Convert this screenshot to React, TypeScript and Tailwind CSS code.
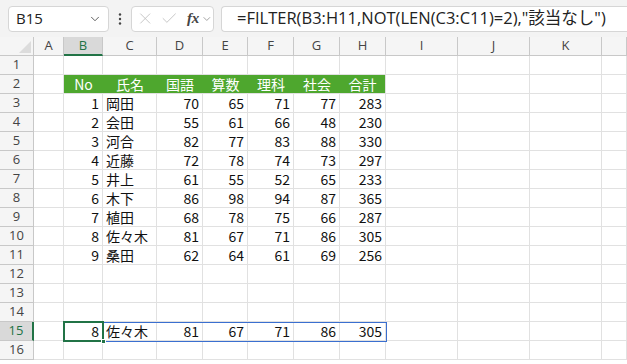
import { ChevronDown, X, Check } from "lucide-react";

const cols = ["A", "B", "C", "D", "E", "F", "G", "H", "I", "J", "K", ""];
const widths = [30, 39, 54, 46, 45, 46, 46, 46, 72, 72, 72, 25];

const header = ["No", "氏名", "国語", "算数", "理科", "社会", "合計"];
const data: (string | number)[][] = [
  [1, "岡田", 70, 65, 71, 77, 283],
  [2, "会田", 55, 61, 66, 48, 230],
  [3, "河合", 82, 77, 83, 88, 330],
  [4, "近藤", 72, 78, 74, 73, 297],
  [5, "井上", 61, 55, 52, 65, 233],
  [6, "木下", 86, 98, 94, 87, 365],
  [7, "植田", 68, 78, 75, 66, 287],
  [8, "佐々木", 81, 67, 71, 86, 305],
  [9, "桑田", 62, 64, 61, 69, 256],
];
const result: (string | number)[] = [8, "佐々木", 81, 67, 71, 86, 305];

const font = { fontFamily: '"Noto Sans CJK JP", "Noto Sans", sans-serif' };

function rowContent(r: number): (string | number)[] | "header" | null {
  if (r === 2) return "header";
  if (r >= 3 && r <= 11) return data[r - 3];
  if (r === 15) return result;
  return null;
}

export default function App() {
  const rows = Array.from({ length: 16 }, (_, i) => i + 1);
  return (
    <div className="relative h-[364px] w-[627px] overflow-hidden bg-white" style={font}>
      {/* formula bar */}
      <div className="flex h-[37px] items-center bg-[#f3f3f3] pl-[8px]">
        <div className="flex h-[26px] w-[101px] items-center justify-between rounded-[4px] border border-[#d6d6d6] bg-white pl-[7px] pr-[6px] text-[15px] text-[#222]">
          <span style={{ fontFamily: '"Open Sans", sans-serif' }}>B15</span>
          <ChevronDown size={14} strokeWidth={1.6} className="text-[#555]" />
        </div>
        <div className="flex w-[22px] justify-center">
          <svg width="4" height="14" viewBox="0 0 4 14">
            <circle cx="2" cy="2.5" r="1.2" fill="#444" />
            <circle cx="2" cy="7" r="1.2" fill="#444" />
            <circle cx="2" cy="11.5" r="1.2" fill="#444" />
          </svg>
        </div>
        <div className="flex h-[26px] w-[83px] items-center rounded-[4px] border border-[#d6d6d6] bg-white pl-[4px] text-[#bdbdbd]">
          <X size={19} strokeWidth={1.1} />
          <Check size={19} strokeWidth={1.1} className="ml-[6px]" />
          <span
            className="ml-[8px] text-[15px] font-bold italic text-[#444]"
            style={{ fontFamily: '"Liberation Serif", serif' }}
          >
            fx
          </span>
          <ChevronDown size={12} strokeWidth={1.4} className="ml-[2px] text-[#777]" />
        </div>
        <div className="ml-[7px] flex h-[26px] flex-1 items-center rounded-l-[4px] border border-r-0 border-[#d6d6d6] bg-white pl-[15px] text-[16.5px] text-[#222]">
          <span style={{ fontFamily: '"Open Sans", "Noto Sans CJK JP", sans-serif' }}>
            =FILTER(B3:H11,NOT(LEN(C3:C11)=2),"該当なし")
          </span>
        </div>
      </div>

      {/* column headers */}
      <div className="flex h-[19px] bg-[#f5f5f5] text-[13px] text-[#444]" style={{ fontFamily: '"Open Sans", sans-serif' }}>
        <div className="relative w-[34px] shrink-0 border-r border-b border-[#c8c8c8]">
          <svg className="absolute bottom-[2px] right-[2px]" width="12" height="12" viewBox="0 0 12 12">
            <polygon points="12,0 12,12 0,12" fill="#dcdcdc" />
          </svg>
        </div>
        {cols.map((c, i) => (
          <div
            key={i}
            className={
              c === "B"
                ? "flex shrink-0 items-center justify-center border-r border-b-2 border-r-[#c8c8c8] border-b-[#217346] bg-[#d9d9d9] text-[#217346]"
                : "flex shrink-0 items-center justify-center border-r border-b border-[#c8c8c8]"
            }
            style={{ width: widths[i] }}
          >
            {c}
          </div>
        ))}
      </div>

      {/* rows */}
      {rows.map((r) => {
        const content = rowContent(r);
        const sel = r === 15;
        return (
          <div key={r} className="flex h-[19px]">
            <div
              className={
                sel
                  ? "flex w-[34px] shrink-0 items-center justify-center border-b border-r-2 border-b-[#c8c8c8] border-r-[#217346] bg-[#d9d9d9] text-[13px] text-[#217346]"
                  : "flex w-[34px] shrink-0 items-center justify-center border-r border-b border-[#c8c8c8] bg-[#f5f5f5] text-[13px] text-[#444]"
              }
              style={{ fontFamily: '"Open Sans", sans-serif' }}
            >
              {r}
            </div>
            {widths.map((w, i) => {
              const ci = i - 1; // B = 0
              if (content === "header" && ci >= 0 && ci <= 6) {
                return (
                  <div
                    key={i}
                    className={
                      "flex shrink-0 items-center justify-center border-b border-[#e1e1e1] bg-[#4ea72e] text-[14px] text-white " +
                      (ci === 6 ? "border-r border-r-[#e1e1e1]" : "")
                    }
                    style={{ width: w }}
                  >
                    {header[ci]}
                  </div>
                );
              }
              const val = Array.isArray(content) && ci >= 0 && ci <= 6 ? content[ci] : null;
              return (
                <div
                  key={i}
                  className={
                    "flex shrink-0 items-center whitespace-nowrap border-r border-b border-[#e1e1e1] px-[3px] text-[14px] text-[#111] " +
                    (ci === 1 ? "justify-start" : "justify-end")
                  }
                  style={{ width: w }}
                >
                  {val}
                </div>
              );
            })}
          </div>
        );
      })}

      {/* spill border B15:H15 */}
      <div className="pointer-events-none absolute left-[64px] top-[322px] h-[20px] w-[323px] border border-[#3a6fd0]" />
      {/* active cell B15 */}
      <div className="pointer-events-none absolute left-[63px] top-[321px] h-[21px] w-[41px] border-2 border-[#217346]" />
      <div className="pointer-events-none absolute left-[101px] top-[339px] h-[5px] w-[5px] border border-white bg-[#217346]" />
    </div>
  );
}
